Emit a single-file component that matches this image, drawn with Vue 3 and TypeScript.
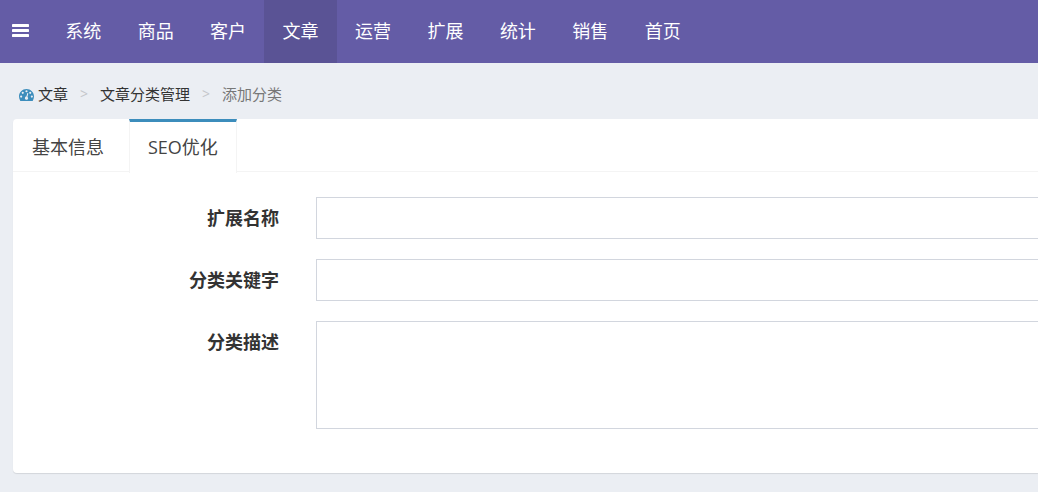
<script setup lang="ts">
import { ref } from 'vue'

const menus: string[] = ['系统', '商品', '客户', '文章', '运营', '扩展', '统计', '销售', '首页']
const activeMenu = ref('文章')
const tabs: string[] = ['基本信息', 'SEO优化']
const activeTab = ref('SEO优化')
const form = ref({ name: '', keywords: '', description: '' })
</script>

<template>
  <div class="page">
    <header class="navbar">
      <button class="toggle" type="button" aria-label="菜单">
        <svg viewBox="0 0 17 13" width="17" height="13" fill="currentColor" aria-hidden="true">
          <rect width="17" height="3" rx="0.4" />
          <rect y="5" width="17" height="3" rx="0.4" />
          <rect y="10" width="17" height="3" rx="0.4" />
        </svg>
      </button>
      <nav class="menu">
        <a
          v-for="item in menus"
          :key="item"
          href="#"
          :class="{ active: item === activeMenu }"
          @click.prevent="activeMenu = item"
        >{{ item }}</a>
      </nav>
    </header>

    <ol class="breadcrumb">
      <li>
        <a href="#">
          <svg class="dash" viewBox="0 0 1792 1408" width="15" height="12" aria-hidden="true">
            <path
              fill="currentColor"
              fill-rule="evenodd"
              d="M384 896a128 128 0 1 0-256 0 128 128 0 0 0 256 0zM576 448a128 128 0 1 0-256 0 128 128 0 0 0 256 0zM1004 929l101-382c9-34-12-68-45-77s-69 12-78 45L881 897c-79 6-149 61-170 142-27 102 34 208 136 235s208-34 235-136c21-81-14-163-78-209zM1664 896a128 128 0 1 0-256 0 128 128 0 0 0 256 0zM1024 256a128 128 0 1 0-256 0 128 128 0 0 0 256 0zM1472 448a128 128 0 1 0-256 0 128 128 0 0 0 256 0zM1792 896C1792 1067 1744 1234 1651 1379C1639 1397 1619 1408 1597 1408H195C173 1408 153 1397 141 1379C48 1235 0 1067 0 896C0 402 402 0 896 0S1792 402 1792 896z"
            />
          </svg>文章</a>
      </li>
      <li><a href="#">文章分类管理</a></li>
      <li class="current">添加分类</li>
    </ol>

    <main class="panel">
      <div class="tabs" role="tablist">
        <button
          v-for="tab in tabs"
          :key="tab"
          type="button"
          role="tab"
          :aria-selected="tab === activeTab"
          :class="{ active: tab === activeTab }"
          @click="activeTab = tab"
        >{{ tab }}</button>
      </div>
      <form class="fields" @submit.prevent>
        <label for="name">扩展名称</label>
        <input id="name" v-model="form.name" type="text" />
        <label for="keywords">分类关键字</label>
        <input id="keywords" v-model="form.keywords" type="text" />
        <label for="description">分类描述</label>
        <textarea id="description" v-model="form.description"></textarea>
      </form>
    </main>
  </div>
</template>

<style>
body {
  margin: 0;
  background: #ebeef3;
}
</style>

<style scoped>
.page {
  min-height: 100vh;
  overflow: hidden;
  box-sizing: border-box;
  background: #ebeef3;
  color: #333;
  font-family: "Open Sans", "Noto Sans CJK SC", sans-serif;
  font-size: 18px;
  line-height: 26px;
}
a {
  color: inherit;
  text-decoration: none;
}
button {
  font: inherit;
  color: inherit;
  background: none;
  cursor: pointer;
}
.navbar {
  display: flex;
  height: 63px;
  background: #645ca6;
  color: #fff;
}
.toggle {
  display: flex;
  align-items: center;
  width: 47px;
  padding: 0 0 2px 12px;
  border: 0;
}
.menu {
  display: grid;
  grid-template-columns: repeat(9, 1fr);
  width: 652px;
}
.menu a {
  display: flex;
  align-items: center;
  justify-content: center;
  padding-bottom: 2px;
}
.menu a.active {
  background: #5a5395;
}
.breadcrumb {
  display: flex;
  align-items: center;
  margin: 0;
  padding: 19px 19px 13px;
  list-style: none;
  font-size: 15px;
  line-height: 24px;
}
.breadcrumb li {
  display: flex;
}
.breadcrumb li a {
  display: flex;
  align-items: center;
}
.breadcrumb li + li::before {
  content: ">";
  width: 32px;
  text-align: center;
  color: #c4c6ca;
  font-size: 14px;
}
.breadcrumb .current {
  color: #777;
}
.dash {
  margin: 2px 4px 0 0;
  color: #3c8dbc;
}
.panel {
  margin-left: 13px;
  background: #fff;
  border-radius: 4px 0 0 4px;
  box-shadow: 0 1px 1px rgba(0, 0, 0, 0.1);
}
.tabs {
  display: flex;
  gap: 6px;
  height: 52px;
  border-bottom: 1px solid #f4f4f4;
}
.tabs button {
  height: 54px;
  padding: 0 18px 2px;
  border: 1px solid transparent;
  border-top: 3px solid transparent;
  border-bottom: 0;
  color: #444;
}
.tabs button.active {
  background: #fff;
  border-color: #3c8dbc #f4f4f4;
}
.fields {
  display: grid;
  grid-template-columns: 266px 1fr;
  gap: 20px 37px;
  padding: 25px 0 44px;
}
.fields label {
  padding-top: 8px;
  text-align: right;
  font-weight: 700;
}
.fields input,
.fields textarea {
  display: block;
  box-sizing: border-box;
  width: 100%;
  height: 42px;
  margin: 0;
  padding: 7px 15px;
  border: 1px solid #d2d6de;
  border-right: 0;
  border-radius: 0;
  outline: 0;
  background: #fff;
  color: #555;
  font: inherit;
}
.fields textarea {
  height: 108px;
  resize: none;
}
</style>
